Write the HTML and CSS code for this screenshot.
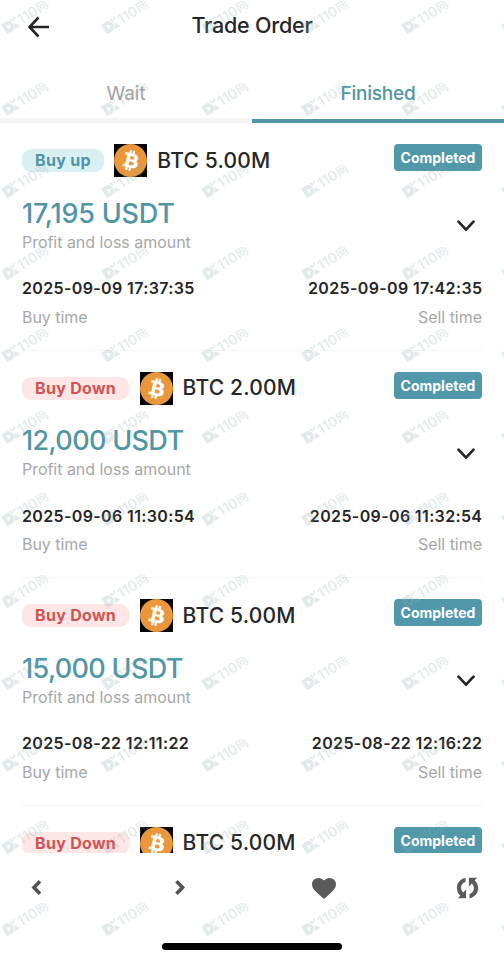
FILE: index.html
```html
<!DOCTYPE html>
<html lang="en">
<head>
<meta charset="utf-8">
<title>Trade Order</title>
<link rel="stylesheet" href="styles.css">
</head>
<body>
<svg class="defs" width="0" height="0">
  <symbol id="btc" viewBox="0 0 32 32">
    <rect width="32" height="32" fill="#050505"/>
    <circle cx="16" cy="16" r="16" fill="#ea973b"/>
    <path fill="#fff" stroke="#fff" stroke-width=".4" d="M23.19 14.02c.31-2.1-1.29-3.23-3.47-3.98l.71-2.84-1.73-.43-.69 2.76-1.38-.33.69-2.77-1.72-.43-.71 2.84-1.1-.26-2.38-.6-.46 1.85s1.28.3 1.25.31c.7.18.83.64.81 1l-.81 3.24.18.06-.18-.05-1.13 4.53c-.09.21-.31.53-.79.41.02.03-1.26-.31-1.26-.31l-.86 1.98 2.25.56 1.23.32-.72 2.87 1.73.43.71-2.84 1.38.36-.71 2.83 1.73.43.72-2.87c2.95.56 5.17.34 6.1-2.33.76-2.15-.03-3.39-1.59-4.2 1.13-.26 1.98-1.01 2.2-2.54zm-3.95 5.54c-.53 2.15-4.15.99-5.32.7l.95-3.81c1.17.3 4.93.88 4.37 3.11zm.54-5.57c-.49 1.96-3.5.96-4.48.72l.86-3.46c.98.25 4.12.7 3.62 2.74z"/>
  </symbol>
  <symbol id="chevron" viewBox="0 0 18 12"><path d="M1.500 1.700l7.500 8 7.500-8" fill="none" stroke="#252628" stroke-width="2.700" stroke-linecap="round" stroke-linejoin="round"/></symbol>
</svg>
<div class="app">
  <header class="bar">
    <svg class="back" viewBox="0 0 22 22"><path d="M11.500 1.500L2.500 11l9 9.500M2 11h20" fill="none" stroke="#252628" stroke-width="2.600"/></svg>
    <h1>Trade Order</h1>
  </header>
  <nav class="tabs"><div class="tab">Wait</div><div class="tab active">Finished</div></nav>
  <main class="orders" id="orders"></main>
  <footer class="tools">
    <svg width="24" height="18" viewBox="-6 -.5 24 18"><path d="M9 1.800L3 8l6 6.200" fill="none" stroke="#535353" stroke-width="3.600"/></svg>
    <svg width="24" height="18" viewBox="-7 -.5 24 18"><path d="M1.500 1.800l6 6.200-6 6.200" fill="none" stroke="#535353" stroke-width="3.600"/></svg>
    <svg width="24" height="21" viewBox="2 3 20 18.350" preserveAspectRatio="none"><path fill="#5b5b5b" d="M12 21.350l-1.450-1.320C5.400 15.360 2 12.280 2 8.500 2 5.420 4.420 3 7.500 3c1.740 0 3.410.810 4.500 2.090C13.090 3.810 14.760 3 16.500 3 19.580 3 22 5.420 22 8.500c0 3.780-3.400 6.860-8.550 11.540L12 21.350z"/></svg>
    <svg width="24" height="22" viewBox="-1.500 0 24 22"><path fill="#5b5b5b" d="M9 .8C3.500 2 .4 6 .4 10.800c0 3.200 1.200 6 3.400 8L1.300 21.300H9.600V12.300L6.800 15.500C3.300 12.200 4 6.300 9 5ZM13 21.200c5.500-1.200 8.600-5.200 8.600-10 0-3.200-1.200-6-3.400-8L20.700.7H12.400V9.700L15.200 6.500C18.700 9.800 18 15.700 13 17Z"/></svg>
  </footer>
  <div class="home"></div>
</div>
<svg class="watermark" width="504" height="960">
  <defs>
    <pattern id="mark" width="100" height="82" patternUnits="userSpaceOnUse" y="1">
      <g transform="translate(10.500 24.500) rotate(-32)" fill="#8fabb0">
        <path fill-rule="evenodd" d="M-7.500-5.500H0L3-2V2L0 5.500H-7.500ZM-3.500-2.500V2.500L.5 0ZM1.500-5.500H4L5.500-3 4.200-1.500ZM6.500-5.500H9L6.700-2.500 5.500-4ZM4.500 0L8.500 5.500H1.500Z"/>
        <text x="9.500" y="5" textLength="21" lengthAdjust="spacingAndGlyphs" class="digits">110</text>
        <text x="31" y="4.500" class="net">网</text>
      </g>
    </pattern>
  </defs>
  <rect width="504" height="960" fill="url(#mark)"/>
</svg>
<script src="orders.js"></script>
</body>
</html>
```
FILE: styles.css
```css
* { box-sizing: border-box; }
body { margin: 0; background: #fff; color: #252628; font-family: Inter, "Liberation Sans", sans-serif; }
.defs { display: block; }
.app { width: 504px; height: 960px; display: flex; flex-direction: column; overflow: hidden; }
.bar { flex: none; height: 68px; display: grid; grid-template-columns: 48px 1fr 48px; padding-top: 9px; }
.back { width: 22px; height: 22px; margin: 7px 0 0 27px; }
h1 { margin: 0; font-size: 21.500px; line-height: 32px; font-weight: 550; letter-spacing: -.22px; text-align: center; }
.tabs { flex: none; height: 55px; display: flex; }
.tab { flex: 1; height: 55px; border-bottom: 5px solid #f4f4f4; text-align: center; font-size: 19px; line-height: 51px; color: #a3a3a3; }
.tab.active { color: #5096a5; border-bottom: 4px solid #5096a5; font-weight: 500; letter-spacing: -.2px; }
.orders { flex: none; height: 730px; overflow: hidden; padding: 0 22px; }
.order { height: 227.500px; padding-top: 21px; border-bottom: 1.500px solid #f4f4f4; }
.order:last-child { height: 55px; border: 0; }
.head { height: 33px; display: flex; align-items: center; }
.side { height: 23px; line-height: 22px; padding: 0 13px; border-radius: 9px; font-size: 16px; font-weight: 650; letter-spacing: .3px; background: #daeff2; color: #5096a5; white-space: nowrap; }
.side.down { background: #fde6e5; color: #cf5553; }
.coin { width: 33px; height: 33px; margin: 0 10px 0 10.500px; flex: none; }
.pair { font-size: 21px; line-height: 20px; font-weight: 500; letter-spacing: .2px; white-space: nowrap; }
.status { margin-left: auto; align-self: flex-start; width: 88px; height: 27px; border-radius: 4px; background: #5199aa; color: #fff; font-size: 14px; line-height: 27px; font-weight: 650; letter-spacing: 0; text-align: center; }
.result { display: flex; justify-content: space-between; align-items: center; padding: 19.500px 7.500px 0 0; }
.amount { font-size: 27px; line-height: 34px; font-weight: 550; letter-spacing: -.2px; color: #5096a5; }
.amount.down { letter-spacing: -.65px; }
.label { font-size: 16px; line-height: 22px; color: #a8a8a8; letter-spacing: -.03px; }
.arrow { width: 18px; height: 12px; margin-top: 3px; }
.times { display: flex; justify-content: space-between; padding-top: 24.500px; }
.sell { text-align: right; }
.date { font-size: 16px; line-height: 22px; font-weight: 570; letter-spacing: .36px; white-space: nowrap; }
.sell .date { margin-right: -.36px; }
.times .label { margin-top: 6.500px; }
.tools { flex: none; height: 70px; padding: 0 25px; display: flex; justify-content: space-between; align-items: center; }
.home { flex: none; width: 180px; height: 7px; margin: 20px auto 0; border-radius: 4px; background: #000; }
.watermark { position: absolute; inset: 0; opacity: .24; pointer-events: none; }
.digits { font: 600 14px Inter, sans-serif; }
.net { font: 500 12px "Noto Sans CJK SC", sans-serif; }
```
FILE: orders.js
```js
const orders = [
  ["up", "5.00M", "17,195", "2025-09-09 17:37:35", "2025-09-09 17:42:35"],
  ["Down", "2.00M", "12,000", "2025-09-06 11:30:54", "2025-09-06 11:32:54"],
  ["Down", "5.00M", "15,000", "2025-08-22 12:11:22", "2025-08-22 12:16:22"],
  ["Down", "5.00M", "", "", ""]
];
document.getElementById("orders").innerHTML = orders.map(([side, size, amount, buy, sell]) => `
<article class="order">
  <div class="head"><span class="side ${side.toLowerCase()}">Buy ${side}</span><svg class="coin"><use href="#btc"/></svg><span class="pair">BTC ${size}</span><span class="status">Completed</span></div>
  ${amount ? `<div class="result"><div><div class="amount ${side.toLowerCase()}">${amount} USDT</div><div class="label">Profit and loss amount</div></div><svg class="arrow"><use href="#chevron"/></svg></div>
  <div class="times"><div><div class="date">${buy}</div><div class="label">Buy time</div></div><div class="sell"><div class="date">${sell}</div><div class="label">Sell time</div></div></div>` : ""}
</article>`).join("");
```
